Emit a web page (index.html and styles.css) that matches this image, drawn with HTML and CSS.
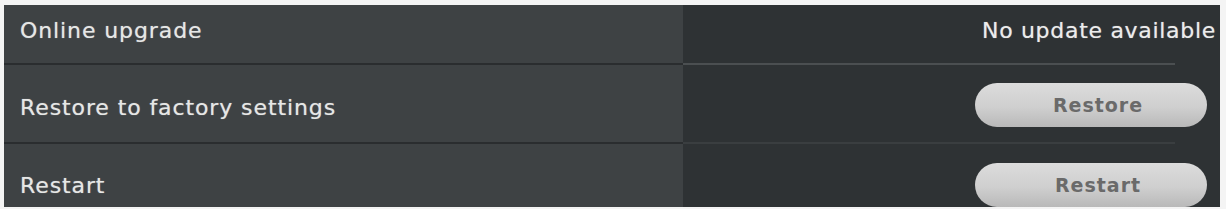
FILE: index.html
```html
<!DOCTYPE html>
<html lang="en">
<head>
<meta charset="UTF-8">
<title>System settings</title>
<link rel="stylesheet" href="styles.css">
</head>
<body>
<div class="panel">
  <div class="row row-upgrade">
    <div class="label">Online upgrade</div>
    <div class="value"><span class="status">No update available</span></div>
  </div>
  <div class="row row-restore">
    <div class="label">Restore to factory settings</div>
    <div class="value"><button class="btn">Restore</button></div>
  </div>
  <div class="row row-restart">
    <div class="label">Restart</div>
    <div class="value"><button class="btn">Restart</button></div>
  </div>
</div>
</body>
</html>
```

FILE: styles.css
```css
body {
  margin: 0;
  padding: 5px 6px 2px 4px;
  background-color: #f4f4f4;
  font-family: "DejaVu Sans", Verdana, sans-serif;
}
.panel {
  height: 202px;
  overflow: hidden;
  background-color: #2e3234;
}
.row {
  display: grid;
  grid-template-columns: 679px 1fr;
}
.row-upgrade { height: 60px; }
.row-restore { height: 79px; }
.row-restart { height: 63px; }
.label {
  display: flex;
  align-items: center;
  padding-left: 16px;
  background-color: #3e4244;
  color: #e6e7e6;
  font-size: 22px;
  letter-spacing: 0.9px;
  text-shadow: 0 0 1px rgba(255, 255, 255, 0.5);
  border-bottom: 2px solid #2a2d2f;
}
.row-upgrade .label { padding-bottom: 8px; }
.row-restore .label { padding-top: 7px; }
.row-restart .label { padding-top: 20px; border-bottom: none; }
.value {
  position: relative;
  display: flex;
  align-items: center;
  justify-content: flex-end;
}
.row-upgrade .value::after,
.row-restore .value::after {
  content: "";
  position: absolute;
  left: 0;
  right: 45px;
  bottom: 0;
  height: 2px;
  background-color: #4b4f51;
}
.row-restore .value::after { background-color: #3a3e40; }
.status {
  padding-right: 4px;
  padding-bottom: 10px;
  color: #ececec;
  font-size: 22px;
  letter-spacing: 0.7px;
  text-shadow: 0 0 1px rgba(255, 255, 255, 0.5);
}
.btn {
  width: 232px;
  height: 44px;
  margin-right: 13px;
  border: none;
  border-radius: 22px;
  background: linear-gradient(#dcdcdc, #cfcfcf 55%, #b9b9b9);
  color: #6a6a6a;
  font-family: "DejaVu Sans", Verdana, sans-serif;
  font-size: 19px;
  font-weight: bold;
  letter-spacing: 1px;
  padding-left: 20px;
}
.row-restart .btn { margin-top: 18px; }
```
